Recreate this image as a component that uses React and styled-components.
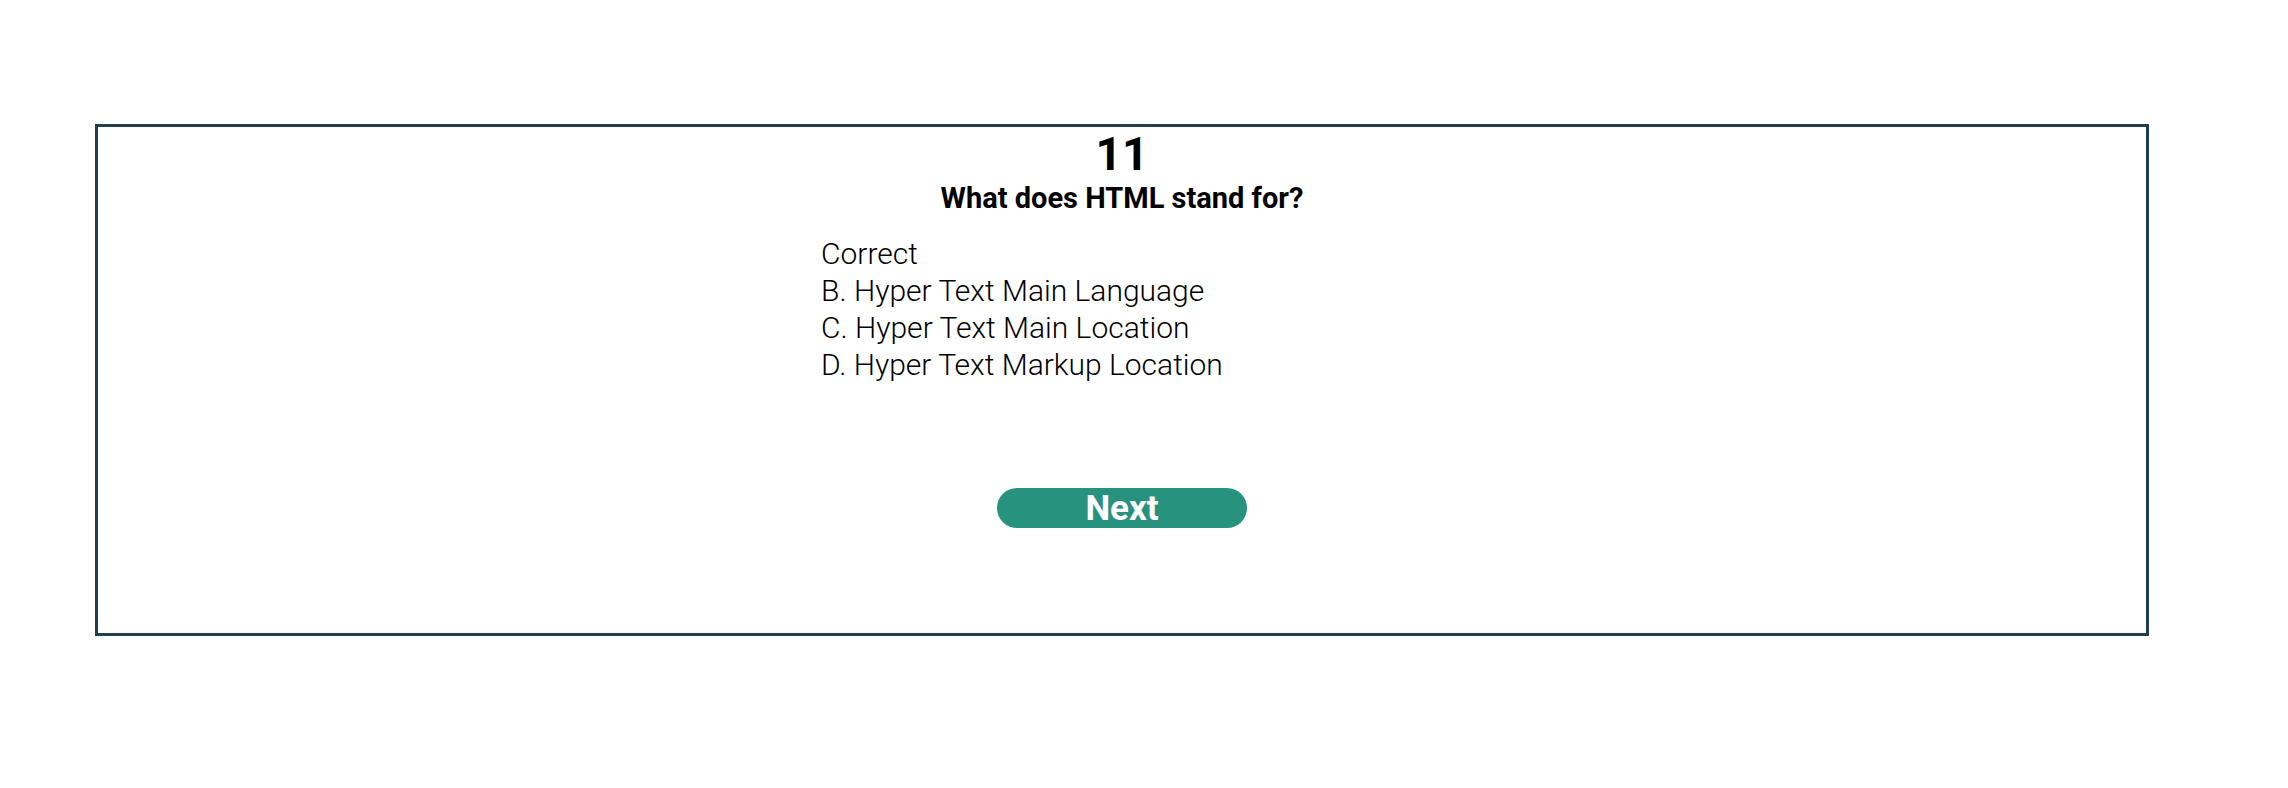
import React from "react";
import styled, { createGlobalStyle } from "styled-components";

const Global = createGlobalStyle`
  html, body { margin: 0; padding: 0; background: #ffffff; }
  body { font-family: Roboto, "Liberation Sans", sans-serif; color: #000; }
`;

const Page = styled.div`
  padding: 124px 0 0 95px;
`;

const Card = styled.section`
  box-sizing: border-box;
  width: 2054px;
  height: 512px;
  border: 3px solid #213f4e;
  display: flex;
  flex-direction: column;
  align-items: center;
`;

const Number = styled.h1`
  margin: 0;
  font-size: 46px;
  font-weight: 700;
  line-height: normal;
`;

const Question = styled.h2`
  margin: 0;
  font-size: 29px;
  font-weight: 700;
  line-height: normal;
`;

const Options = styled.ul`
  list-style: none;
  margin: 20px 0 0;
  padding: 0;
  width: 602px;
  font-size: 30px;
  font-weight: 300;
  line-height: 37px;
`;

const Option = styled.li`
  margin: 0;
`;

const NextButton = styled.button`
  margin-top: 105px;
  width: 250px;
  height: 40px;
  border: none;
  border-radius: 20px;
  background: #27937f;
  color: #ffffff;
  font-family: Roboto, "Liberation Sans", sans-serif;
  font-size: 35px;
  font-weight: 700;
  line-height: 42px;
  padding: 0;
  cursor: pointer;
`;

const options = [
  "Correct",
  "B. Hyper Text Main Language",
  "C. Hyper Text Main Location",
  "D. Hyper Text Markup Location",
];

export default function App() {
  return (
    <>
      <Global />
      <Page>
        <Card>
          <Number>11</Number>
          <Question>What does HTML stand for?</Question>
          <Options>
            {options.map((o) => (
              <Option key={o}>{o}</Option>
            ))}
          </Options>
          <NextButton>Next</NextButton>
        </Card>
      </Page>
    </>
  );
}
